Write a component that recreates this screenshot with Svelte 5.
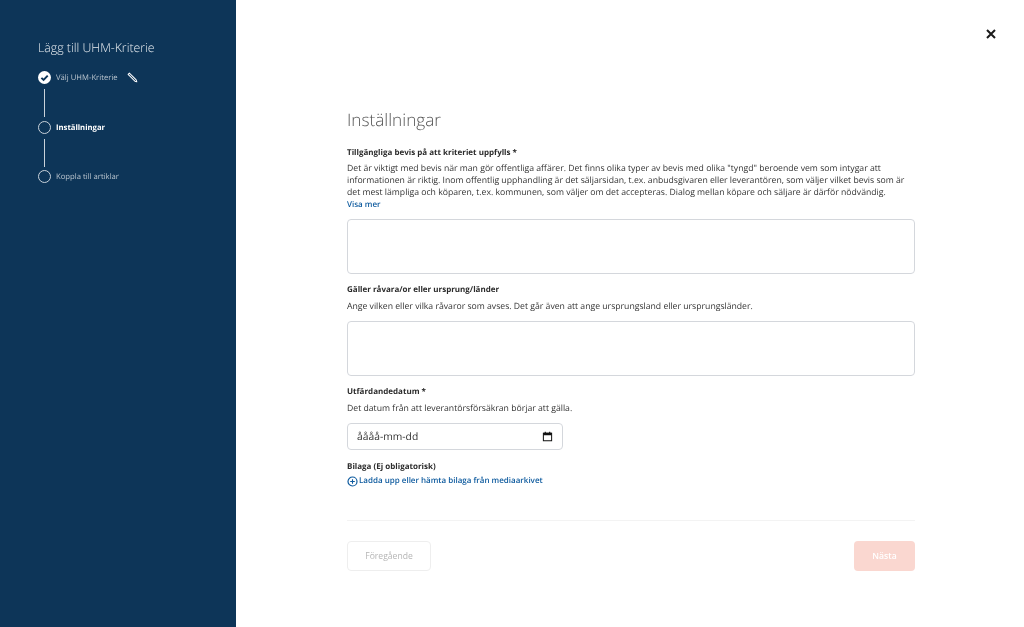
<script>
  const steps = [
    { label: 'Välj UHM-Kriterie', state: 'done' },
    { label: 'Inställningar', state: 'active' },
    { label: 'Koppla till artiklar', state: 'todo' }
  ];
</script>

<div class="page">
  <aside class="side">
    <h2>Lägg till UHM-Kriterie</h2>
    <ol>
      {#each steps as s, i}
        <li class={s.state}>
          <div class="row">
            {#if s.state === 'done'}
              <svg class="dot" viewBox="0 0 13 13" width="13" height="13"><circle cx="6.5" cy="6.5" r="6.5" fill="#fff"/><path d="M3.4 6.8 5.6 9 9.7 4.6" fill="none" stroke="#0d3558" stroke-width="1.9"/></svg>
            {:else}
              <span class="ring"></span>
            {/if}
            <span class="txt">{s.label}</span>
            {#if s.state === 'done'}
              <svg class="pen" viewBox="0 0 12 12" width="11" height="11"><path d="M1.2 2.6 2.6 1.2 10 8.6 10.7 10.7 8.6 10Z" fill="#0d3558" stroke="#fff" stroke-width="1.1" stroke-linejoin="round"/></svg>
            {/if}
          </div>
          {#if i < steps.length - 1}<span class="line"></span>{/if}
        </li>
      {/each}
    </ol>
  </aside>
  <main>
    <button class="close" aria-label="Stäng">
      <svg viewBox="0 0 10 10" width="10" height="10"><path d="M1 1 9 9M9 1 1 9" stroke="#1a1a1a" stroke-width="2" fill="none"/></svg>
    </button>
    <div class="form">
      <h1>Inställningar</h1>
      <h3 class="first">Tillgängliga bevis på att kriteriet uppfylls *</h3>
      <p class="tight">Det är viktigt med bevis när man gör offentliga affärer. Det finns olika typer av bevis med olika "tyngd" beroende vem som intygar att informationen är riktig. Inom offentlig upphandling är det säljarsidan, t.ex. anbudsgivaren eller leverantören, som väljer vilket bevis som är det mest lämpliga och köparen, t.ex. kommunen, som väljer om det accepteras. Dialog mellan köpare och säljare är därför nödvändig.</p>
      <a class="more" href="#more">Visa mer</a>
      <div class="area after-more"></div>
      <h3>Gäller råvara/or eller ursprung/länder</h3>
      <p>Ange vilken eller vilka råvaror som avses. Det går även att ange ursprungsland eller ursprungsländer.</p>
      <div class="area"></div>
      <h3>Utfärdandedatum *</h3>
      <p>Det datum från att leverantörsförsäkran börjar att gälla.</p>
      <div class="date">
        <span>åååå-mm-dd</span>
        <svg viewBox="0 0 12 12" width="11" height="11"><path d="M1.5 2.5h9v8.2h-9z" fill="none" stroke="#111" stroke-width="1.1"/><path d="M1.5 2h9v2.6h-9zM3 .8h1.2v1.5H3zM7.8.8H9v1.5H7.8z" fill="#111"/></svg>
      </div>
      <h3 class="attach">Bilaga (Ej obligatorisk)</h3>
      <a class="upload" href="#upload">
        <svg viewBox="0 0 11 11" width="11" height="11"><circle cx="5.5" cy="5.5" r="4.5" fill="none" stroke="#0d5a9e" stroke-width="1.2"/><path d="M5.5 3.2v4.6M3.2 5.5h4.6" stroke="#0d5a9e" stroke-width="1.1"/></svg>
        Ladda upp eller hämta bilaga från mediaarkivet
      </a>
      <hr />
      <div class="actions">
        <button class="prev">Föregående</button>
        <button class="next">Nästa</button>
      </div>
    </div>
  </main>
</div>

<style>
  :global(body) { margin: 0; background: #fff; }
  .page {
    display: flex;
    height: 627px;
    overflow: hidden;
    font-family: "Open Sans", sans-serif;
    font-size: 8.66px;
    color: #333;
    text-rendering: geometricPrecision;
  }
  .side {
    width: 236px;
    flex: none;
    box-sizing: border-box;
    background: #0d3558;
    padding: 38px 0 0 38px;
    color: #fff;
  }
  .side h2 {
    margin: 0 0 14px;
    font-size: 12.3px;
    line-height: 19px;
    font-weight: 300;
    color: #e6ebef;
    will-change: transform;
  }
  ol { list-style: none; margin: 0; padding: 0; will-change: transform; }
  li { display: flex; flex-direction: column; }
  .row { display: flex; align-items: center; height: 13px; gap: 5px; }
  .ring {
    width: 13px; height: 13px; box-sizing: border-box;
    border: 1px solid #c9d2da; border-radius: 50%;
  }
  .dot { flex: none; }
  .txt { font-size: 7.7px; color: #b9c4ce; line-height: 13px; margin-top: 2px; }
  .active .txt { color: #fff; font-weight: 700; }
  .pen { margin-left: 4px; }
  .line {
    width: 1px; height: 28px; background: #c9d2da;
    margin: 5px 0 3.5px 6px;
  }
  main { flex: 1; position: relative; }
  .close {
    position: absolute; top: 29px; left: 750px;
    width: 10px; height: 10px; padding: 0; border: 0; background: none;
    display: flex;
  }
  .form {
    width: 568px;
    margin-left: 111px;
    padding-top: 108px;
    display: flex;
    flex-direction: column;
    align-items: stretch;
    will-change: transform;
  }
  h1 {
    margin: 0;
    font-size: 17.2px;
    line-height: 26px;
    font-weight: 300;
    color: #555;
  }
  h3 {
    margin: 0;
    padding-top: 1px;
    font-size: 8px;
    line-height: 12px;
    font-weight: 700;
    color: #2b2b2b;
  }
  h3.first { margin-top: 12px; }
  p { margin: 4px 0 0; font-size: 8.66px; line-height: 12px; color: #333; }
  p.tight { margin-top: 3px; }
  .more {
    margin-top: 1px;
    font-size: 8px; line-height: 12px; font-weight: 600; color: #0d5a9e; text-decoration: none;
  }
  .area {
    height: 55px; box-sizing: border-box; margin: 9px 0 9px;
    border: 1px solid #d4d7dc; border-radius: 4px;
  }
  .area.after-more { margin-top: 8px; }
  .date {
    width: 216px; height: 27px; box-sizing: border-box; margin-top: 9px;
    border: 1px solid #d4d7dc; border-radius: 4px;
    display: flex; align-items: center; justify-content: space-between;
    padding: 0 9px 0 9px;
    font-size: 10.3px; color: #333;
  }
  .attach { margin-top: 10px; }
  .upload {
    margin-top: 1px;
    display: flex; align-items: center; gap: 1px;
    font-size: 8px; line-height: 14px; font-weight: 600; color: #0d5a9e; text-decoration: none;
  }
  hr { width: 100%; margin: 32px 0 20px; border: 0; border-top: 1px solid #f3f3f3; }
  .actions { display: flex; justify-content: space-between; }
  button { font-family: inherit; }
  .prev, .next {
    height: 30px; border-radius: 4px; font-size: 8.6px; padding: 0;
  }
  .prev {
    width: 84px; background: #fff; border: 1px solid #eee; color: #b5b5b5;
  }
  .next {
    width: 61px; background: #fad7d0; border: 0; color: #fff; font-weight: 600;
  }
</style>
